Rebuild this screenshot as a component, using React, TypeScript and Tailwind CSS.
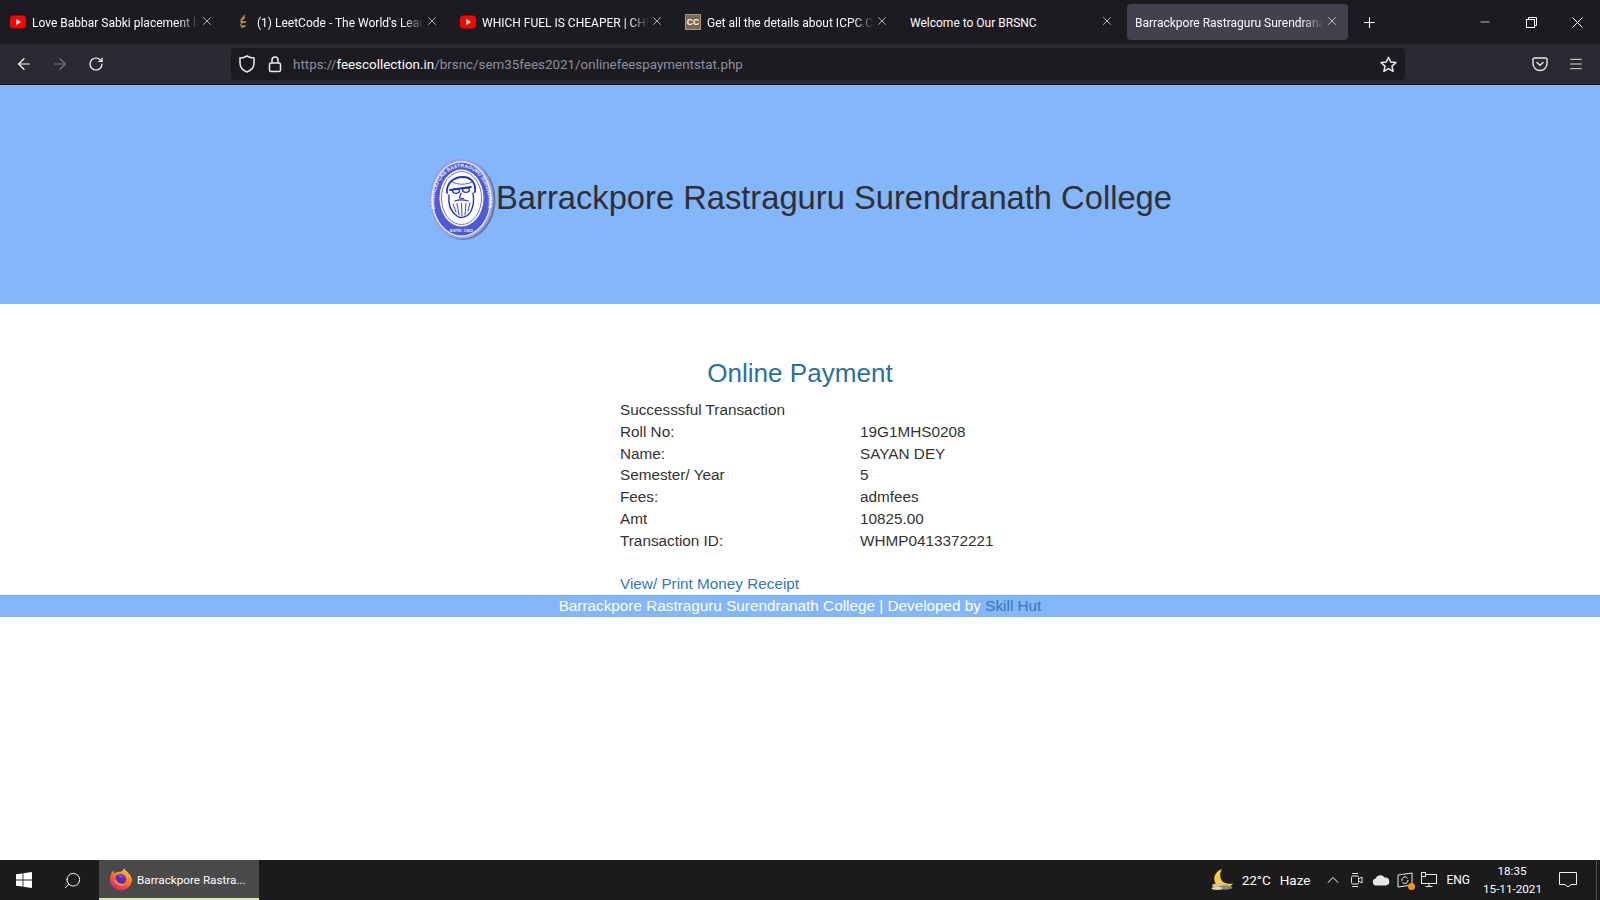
import React from "react";
import { ArrowLeft, ArrowRight, RotateCw, Plus, Minus, X, Menu, Search, ChevronUp } from "lucide-react";

const uiFont = "font-['Roboto','Noto_Sans',sans-serif]";
const arial = "font-['Liberation_Sans',Arial,sans-serif]";

function YouTube() {
  return (
    <svg width="16" height="16" viewBox="0 0 16 16" className="shrink-0">
      <rect x="0" y="1.5" width="16" height="13" rx="3.5" fill="#f00" />
      <path d="M6.3 5 L11 8 L6.3 11 Z" fill="#fff" />
    </svg>
  );
}
function LeetCode() {
  return (
    <svg width="16" height="16" viewBox="0 0 16 16" className="shrink-0">
      <path d="M10 1 L5.5 6.5 L7 9 L5.5 11 L8 14" fill="none" stroke="#8a6a3a" strokeWidth="1.6" />
      <path d="M6 8 H11" stroke="#b9b9b9" strokeWidth="1.3" />
      <path d="M9.5 3 L7 6" stroke="#f0a030" strokeWidth="1.5" />
      <path d="M6.5 12.5 L10.5 12" stroke="#f0a030" strokeWidth="1.3" />
    </svg>
  );
}
function CC() {
  return (
    <div className="w-4 h-4 shrink-0 bg-[#7b6650] border border-[#a79784] flex items-center justify-center">
      <span className={`${arial} text-[8.5px] font-bold text-white leading-none`}>CC</span>
    </div>
  );
}

function Tab({ icon, title, active, fade = true }: { icon?: React.ReactNode; title: string; active?: boolean; fade?: boolean }) {
  return (
    <div className={`w-[221px] h-9 shrink-0 mr-1 rounded flex items-center pl-2 pr-[9px] ${active ? "bg-[#42414d]" : ""}`}>
      {icon ? <div className="w-[22px] shrink-0">{icon}</div> : null}
      <div
        className={`flex-1 min-w-0 overflow-hidden whitespace-nowrap text-[12px] leading-[18px] pt-[1px] text-[#fbfbfe] ${fade ? "[mask-image:linear-gradient(to_right,black_88%,transparent_100%)]" : ""}`}
      >
        {title}
      </div>
      <X size={14} strokeWidth={1.2} className="text-[#f0f0f2] ml-[1px] -translate-y-[1px] shrink-0" />
    </div>
  );
}

function ShieldIcon() {
  return (
    <svg width="16" height="18" viewBox="0 0 16 18" fill="none" stroke="#ececf0" strokeWidth="1.5" className="ml-[8px]">
      <path d="M8 1 C10 2.3 12.5 3 15 3 V8 C15 12.5 12 15.5 8 17 C4 15.5 1 12.5 1 8 V3 C3.5 3 6 2.3 8 1 Z" />
    </svg>
  );
}
function LockIcon() {
  return (
    <svg width="14" height="18" viewBox="0 0 14 18" fill="none" stroke="#ececf0" strokeWidth="1.5" className="ml-[13px]">
      <path d="M4 8 V5 A3 3 0 0 1 10 5 V8" />
      <rect x="1.5" y="8" width="11" height="8.5" rx="1.6" />
    </svg>
  );
}
function StarIcon() {
  return (
    <svg width="17" height="17" viewBox="0 0 17 17" fill="none" stroke="#ececf0" strokeWidth="1.5" strokeLinejoin="round">
      <path d="M8.5 1.2 L10.7 6 L15.9 6.6 L12 10.1 L13.1 15.3 L8.5 12.7 L3.9 15.3 L5 10.1 L1.1 6.6 L6.3 6 Z" />
    </svg>
  );
}
function Pocket() {
  return (
    <svg width="16" height="16" viewBox="0 0 16 16" fill="none" stroke="#e8e8ec" strokeWidth="1.4">
      <path d="M2.6 2 H13.4 A1.6 1.6 0 0 1 15 3.6 V7.5 A7 7 0 0 1 1 7.5 V3.6 A1.6 1.6 0 0 1 2.6 2 Z" />
      <path d="M5 6.5 L8 9.3 L11 6.5" strokeLinecap="round" />
    </svg>
  );
}
function Restore() {
  return (
    <svg width="11" height="11" viewBox="0 0 11 11" fill="none" stroke="#fff" strokeWidth="1">
      <rect x="0.5" y="2.5" width="8" height="8" />
      <path d="M2.5 2.5 V0.5 H10.5 V8.5 H8.5" />
    </svg>
  );
}
function WinX() {
  return (
    <svg width="11" height="11" viewBox="0 0 11 11" stroke="#fff" strokeWidth="1">
      <path d="M0.5 0.5 L10.5 10.5 M10.5 0.5 L0.5 10.5" />
    </svg>
  );
}

function Logo() {
  return (
    <svg width="68" height="84" viewBox="0 0 68 84" className="shrink-0">
      <defs>
        <path id="ring" d="M7 52 A27 35 0 1 1 60 52" />
      </defs>
      <ellipse cx="35" cy="43" rx="32.5" ry="40" fill="#4c5068" opacity="0.6" />
      <ellipse cx="33.5" cy="42" rx="32" ry="40" fill="#9a9fe6" />
      <ellipse cx="33.5" cy="42" rx="30" ry="38" fill="#e4e7fb" />
      <ellipse cx="33.5" cy="42" rx="28.5" ry="36.5" fill="#4f5bd6" />
      <text fontSize="5" fill="#f4f5ff" fontFamily="Liberation Sans" fontWeight="700">
        <textPath href="#ring">BARRACKPORE RASTRAGURU SURENDRANATH COLLEGE</textPath>
      </text>
      <text x="33.5" y="74.5" textAnchor="middle" fontSize="4.2" fontWeight="700" fill="#f4f5ff" fontFamily="Liberation Sans">ESTD. 1953</text>
      <ellipse cx="33.5" cy="41" rx="22" ry="28.5" fill="#fff" />
      <ellipse cx="33.5" cy="41" rx="20" ry="26.5" fill="none" stroke="#6a75e0" strokeWidth="1" />
      <g fill="none" stroke="#2533c4" strokeLinecap="round">
        <path d="M19 36 C18 26 26 20 35 20 C43 20 48 26 47 35" strokeWidth="1.8" />
        <path d="M24 25 C30 28 38 28 44 25" strokeWidth="0.8" />
        <path d="M22 33 L43 30" strokeWidth="1.8" />
        <ellipse cx="28" cy="34" rx="3.4" ry="2.4" strokeWidth="1.3" />
        <ellipse cx="38" cy="33" rx="3.4" ry="2.4" strokeWidth="1.3" />
        <path d="M33 36 L31.5 41 L35.5 41.5" strokeWidth="1.2" />
        <path d="M21 38 C20 46 22 54 29 59 C33 62 40 60 43 54 C46 48 46 42 45 36" strokeWidth="1.4" />
        <path d="M27 44 C30 42.5 36 42.5 40 44" strokeWidth="1.3" />
        <path d="M25 47 L28 55 M29 46.5 L31 58 M33.5 46.5 L34 59 M38 46.5 L37 58 M42 46 L40 54" strokeWidth="0.9" />
      </g>
    </svg>
  );
}

function Firefox() {
  return (
    <svg width="24" height="24" viewBox="0 0 24 24" className="shrink-0">
      <defs>
        <linearGradient id="fx" x1="0.8" y1="0" x2="0.2" y2="1">
          <stop offset="0" stopColor="#ffd23f" />
          <stop offset="0.45" stopColor="#ff7a18" />
          <stop offset="1" stopColor="#e31587" />
        </linearGradient>
      </defs>
      <path d="M15 1 C16 4 22 6 23 13 A11 11 0 1 1 1.5 9 C2 6 3.5 4 4.5 3.5 C4.4 5 4.8 6 5.5 6.7 C7 5 9 4.5 11 5 C13 4 15 3 15 1 Z" fill="url(#fx)" />
      <circle cx="11.5" cy="12.5" r="5.6" fill="#5b2bbf" />
      <path d="M6 10 C7 16 13 19 18 15 C16 20 8 20 5.5 14 Z" fill="#ff9a20" />
      <path d="M10 8 C12 8 15 9 16 12 C14 10 12 10 10 10 Z" fill="#b44bd6" />
    </svg>
  );
}

function Moon() {
  return (
    <svg width="26" height="26" viewBox="0 0 26 26">
      <path d="M12 2 C9 7 10 13 14 15.5 C17 17 20 17 23 16.5 C20 21 12 22 7 18 C2 13 4 5 12 2 Z" fill="#f6cc3c" />
      <ellipse cx="10" cy="18.5" rx="8" ry="2.5" fill="#d8c296" />
      <ellipse cx="15" cy="20.5" rx="7.5" ry="2.2" fill="#8f8674" />
      <ellipse cx="7" cy="21.5" rx="5.5" ry="1.4" fill="#e8d7a8" />
    </svg>
  );
}
function WindowsLogo() {
  return (
    <svg width="16" height="16" viewBox="0 0 16 16" fill="#fff">
      <path d="M0 2.3 L6.6 1.4 V7.5 H0 Z M7.4 1.3 L16 0 V7.5 H7.4 Z M0 8.4 H6.6 V14.6 L0 13.7 Z M7.4 8.4 H16 V16 L7.4 14.8 Z" />
    </svg>
  );
}
function Meet() {
  return (
    <svg width="16" height="16" viewBox="0 0 16 16" fill="none" stroke="#e8e8e8" strokeWidth="1">
      <path d="M3 1.5 H9 M3 14.5 H9" />
      <rect x="2.5" y="4" width="7" height="8" rx="1.5" />
      <path d="M9.5 7 L13 5 V11 L9.5 9" />
    </svg>
  );
}
function Cloud() {
  return (
    <svg width="18" height="12" viewBox="0 0 18 12" fill="#e6e6e6">
      <path d="M4 11.5 A3.5 3.5 0 0 1 3.6 4.6 A5 5 0 0 1 12.6 3.6 A4 4 0 0 1 14 11.5 Z" />
    </svg>
  );
}
function Sync() {
  return (
    <div className="relative w-4 h-4">
      <svg width="16" height="16" viewBox="0 0 16 16" fill="none" stroke="#e8e8e8" strokeWidth="1">
        <path d="M1 3 L15 1 V13 L1 15 Z" />
        <path d="M5 9 A3.2 3.2 0 0 1 10.5 6 M11 8 A3.2 3.2 0 0 1 5.5 10.5" />
      </svg>
      <span className="absolute -right-[2px] -bottom-[2px] w-[7px] h-[7px] rounded-full bg-[#f7941d]" />
    </div>
  );
}
function Network() {
  return (
    <svg width="16" height="16" viewBox="0 0 16 16" fill="none" stroke="#e8e8e8" strokeWidth="1">
      <rect x="0.5" y="2.5" width="15" height="9" />
      <path d="M8 11.5 V14.5 M4.5 14.5 H11.5" />
      <rect x="0.5" y="0.5" width="4" height="4" fill="#1c1c1c" />
    </svg>
  );
}
function Notify() {
  return (
    <svg width="18" height="16" viewBox="0 0 18 16" fill="none" stroke="#f0f0f0" strokeWidth="1">
      <path d="M0.5 0.5 H17.5 V12.5 H12 L9 15 L6 12.5 H0.5 Z" />
    </svg>
  );
}

const rows: [string, string][] = [
  ["Roll No:", "19G1MHS0208"],
  ["Name:", "SAYAN DEY"],
  ["Semester/ Year", "5"],
  ["Fees:", "admfees"],
  ["Amt", "10825.00"],
  ["Transaction ID:", "WHMP0413372221"],
];

export default function App() {
  return (
    <div className={`w-[1600px] h-[900px] overflow-hidden flex flex-col bg-white ${uiFont}`}>
      {/* tab strip */}
      <div className="h-11 shrink-0 bg-[#1c1b22] flex items-center pl-[2px]">
        <Tab icon={<YouTube />} title="Love Babbar Sabki placement ladder" />
        <Tab icon={<LeetCode />} title="(1) LeetCode - The World's Leading" />
        <Tab icon={<YouTube />} title="WHICH FUEL IS CHEAPER | CHEAPEST" />
        <Tab icon={<CC />} title="Get all the details about ICPC Contest" />
        <Tab title="Welcome to Our BRSNC" fade={false} />
        <Tab title="Barrackpore Rastraguru Surendranath" active />
        <div className="w-[36px] -ml-[1px] flex justify-center shrink-0">
          <Plus size={17} strokeWidth={1.5} className="text-white" />
        </div>
        <div className="flex-1" />
        <div className="w-[46px] flex justify-center"><Minus size={14} strokeWidth={1.2} className="text-white" /></div>
        <div className="w-[46px] flex justify-center"><Restore /></div>
        <div className="w-[46px] flex justify-center"><WinX /></div>
      </div>
      {/* nav bar */}
      <div className="h-[41px] shrink-0 bg-[#2b2a33] border-b border-[#0c0c0d] flex items-center pl-[6px]">
        <div className="w-9 flex justify-center"><ArrowLeft size={18} strokeWidth={1.6} className="text-[#fbfbfe]" /></div>
        <div className="w-9 flex justify-center"><ArrowRight size={18} strokeWidth={1.6} className="text-[#75747c]" /></div>
        <div className="w-9 flex justify-center"><RotateCw size={16} strokeWidth={1.8} className="text-[#fbfbfe]" /></div>
        <div className="ml-[117px] w-[1174px] h-8 bg-[#1c1b22] rounded flex items-center shrink-0">
          <ShieldIcon />
          <LockIcon />
          <div className="ml-[11px] text-[13.4px] leading-[20px] pt-[1px] text-[#8f8f9d] whitespace-nowrap">
            https://<span className="text-[#fbfbfe]">feescollection.in</span>/brsnc/sem35fees2021/onlinefeespaymentstat.php
          </div>
          <div className="flex-1" />
          <div className="mr-[8px]"><StarIcon /></div>
        </div>
        <div className="flex-1" />
        <div className="w-9 flex justify-center"><Pocket /></div>
        <div className="w-9 flex justify-center mr-[6px]"><Menu size={16} strokeWidth={1.4} className="text-[#e8e8ec]" /></div>
      </div>
      {/* page */}
      <main className={`flex-1 min-h-0 ${arial} text-[#333333]`}>
        <header className="h-[219px] pt-[9px] bg-[#84b6fa] flex items-center justify-center">
          <Logo />
          <h1 className="text-[32.7px] font-normal text-[#2f2f34] -translate-y-[1px] whitespace-nowrap">Barrackpore Rastraguru Surendranath College</h1>
        </header>
        <h2 className="mt-[52px] h-[34px] text-center text-[26.1px] leading-[34px] text-[#2b7199]">Online Payment</h2>
        <div className="mt-[9px] pl-[620px] text-[15.3px] leading-[21.75px]">
          <div>Successsful Transaction</div>
          {rows.map(([k, v]) => (
            <div key={k} className="flex">
              <div className="w-[240px]">{k}</div>
              <div>{v}</div>
            </div>
          ))}
          <div className="h-[21.75px]" />
          <a className="text-[#337ab7]">View/ Print Money Receipt</a>
        </div>
        <footer className="h-[22px] bg-[#84b6fa] text-center text-white text-[15.3px] leading-[21.75px]">
          Barrackpore Rastraguru Surendranath College | Developed by <span className="text-[#337ab7]">Skill Hut</span>
        </footer>
      </main>
      {/* taskbar */}
      <div className="h-10 shrink-0 bg-[#1b1b1b] flex items-center text-white">
        <div className="w-12 flex justify-center"><WindowsLogo /></div>
        <div className="w-[48px] flex justify-center"><Search size={19} strokeWidth={1.2} className="-scale-x-100" /></div>
        <div className="w-[160px] h-10 ml-[3px] bg-[#4a4a4a] border-b-2 border-[#d9efa9] flex items-center pl-[10px] gap-[4px]">
          <Firefox />
          <span className="text-[11.7px] leading-[18px] pt-[1px] text-white whitespace-nowrap">Barrackpore Rastra...</span>
        </div>
        <div className="flex-1" />
        <Moon />
        <span className="ml-[6px] text-[13.5px]">22°C</span>
        <span className="ml-[9px] text-[13.5px]">Haze</span>
        <ChevronUp size={20} strokeWidth={1.2} className="ml-[13px]" />
        <div className="ml-[6px]"><Meet /></div>
        <div className="ml-[7px]"><Cloud /></div>
        <div className="ml-[7px]"><Sync /></div>
        <div className="ml-[8px]"><Network /></div>
        <span className="ml-[9px] text-[12px]">ENG</span>
        <div className="ml-[13px] w-[58px] text-center text-[11.7px] leading-[18px] whitespace-nowrap">
          <div>18:35</div>
          <div>15-11-2021</div>
        </div>
        <div className="ml-[15px] w-[24px] flex justify-center"><Notify /></div>
        <div className="ml-[16px] w-[1px] h-10 bg-[#555]" />
        <div className="w-[3px]" />
      </div>
    </div>
  );
}
